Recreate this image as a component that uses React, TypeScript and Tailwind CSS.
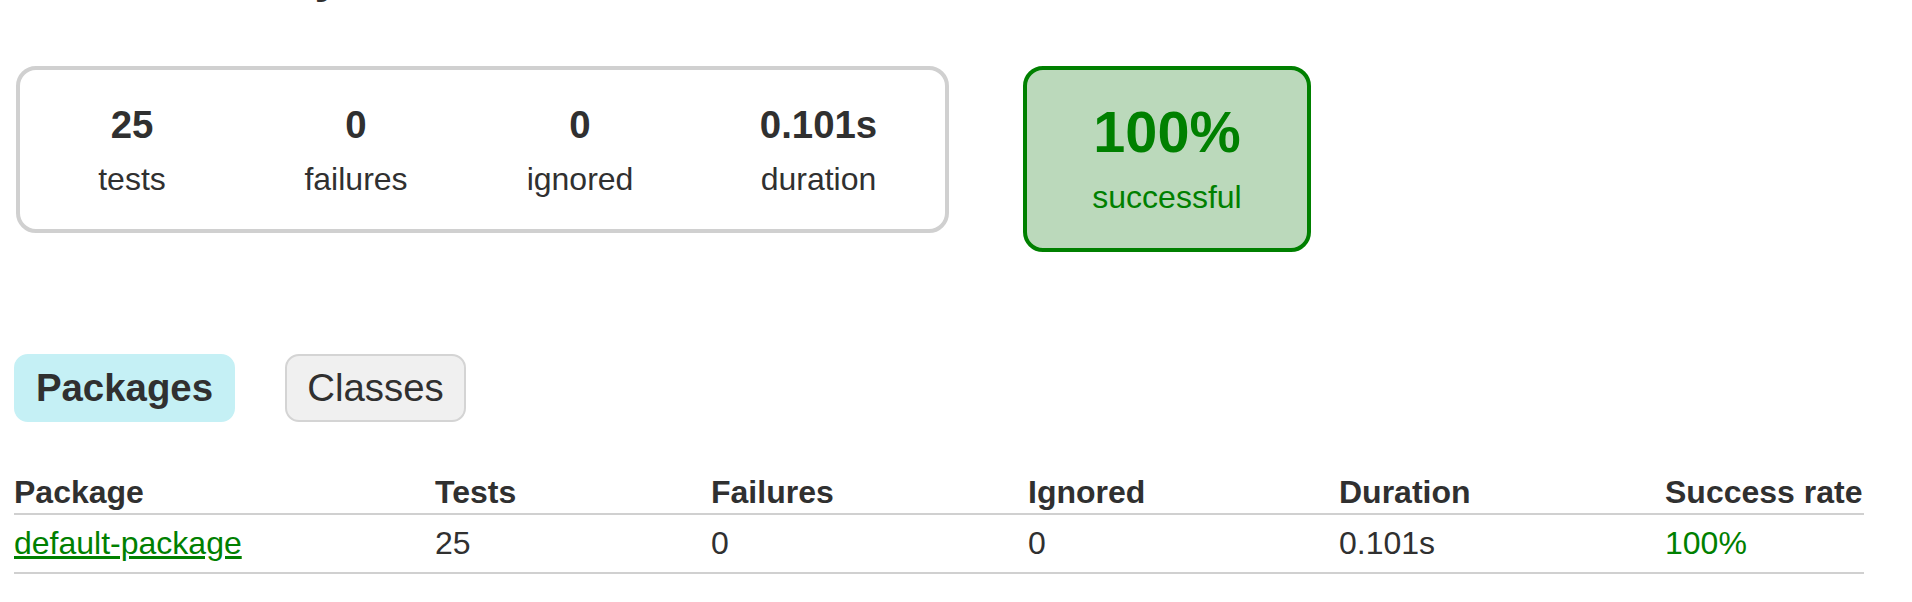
import React from "react";

const stats = [
  { value: "25", label: "tests", w: "w-[224px]" },
  { value: "0", label: "failures", w: "w-[224px]" },
  { value: "0", label: "ignored", w: "w-[224px]" },
  { value: "0.101s", label: "duration", w: "w-[253px]" },
];

const cols = [
  { name: "Package", w: "w-[421px]" },
  { name: "Tests", w: "w-[276px]" },
  { name: "Failures", w: "w-[317px]" },
  { name: "Ignored", w: "w-[311px]" },
  { name: "Duration", w: "w-[326px]" },
  { name: "Success rate", w: "w-[199px]" },
];

export default function App() {
  return (
    <div className="flex min-h-screen flex-col bg-white pl-[14px] font-['Liberation_Sans',Arial,Helvetica,sans-serif] text-[#303030]">
      <h1 className="mt-[-48px] whitespace-nowrap text-[48px] font-bold leading-[48px]">
        Test Summary
      </h1>

      <div className="mt-[66px] flex items-start">
        <div className="ml-[2px] flex rounded-[20px] border-4 border-[#d0d0d0]">
          {stats.map((s) => (
            <div key={s.label} className={`${s.w} pb-[31px] pt-[30px] text-center`}>
              <div className="text-[38.4px] font-bold leading-[50px]">{s.value}</div>
              <div className="mt-[11px] text-[32px] leading-[37px]">{s.label}</div>
            </div>
          ))}
        </div>
        <div className="ml-[74px] w-[288px] rounded-[20px] border-4 border-[#008000] bg-[#bbd9bb] pb-[32px] pt-[30px] text-center text-[#008000]">
          <div className="text-[57.6px] font-bold leading-[64px]">100%</div>
          <div className="mt-[15px] text-[32px] leading-[37px]">successful</div>
        </div>
      </div>

      <div className="mt-[102px] flex">
        <div className="flex h-[68px] w-[221px] items-center justify-center rounded-[14px] border-2 border-[#c5f0f5] bg-[#c5f0f5] text-[38.4px] font-bold leading-[44px]">
          Packages
        </div>
        <div className="ml-[50px] flex h-[68px] w-[181px] items-center justify-center rounded-[14px] border-2 border-[#d4d4d4] bg-[#f0f0f0] text-[38.4px] leading-[44px]">
          Classes
        </div>
      </div>

      <table className="mt-[52px] w-[1850px] table-fixed border-separate border-spacing-0 text-[32px] leading-[37px]">
        <thead>
          <tr>
            {cols.map((c) => (
              <th
                key={c.name}
                className={`${c.w} whitespace-nowrap border-b-2 border-[#d0d0d0] p-0 pb-[2px] text-left font-bold`}
              >
                {c.name}
              </th>
            ))}
          </tr>
        </thead>
        <tbody>
          <tr>
            <td className="border-b-2 border-[#d0d0d0] px-0 py-[10px]">
              <a href="#" className="text-[#008000] underline">
                default-package
              </a>
            </td>
            <td className="border-b-2 border-[#d0d0d0] px-0 py-[10px]">25</td>
            <td className="border-b-2 border-[#d0d0d0] px-0 py-[10px]">0</td>
            <td className="border-b-2 border-[#d0d0d0] px-0 py-[10px]">0</td>
            <td className="border-b-2 border-[#d0d0d0] px-0 py-[10px]">0.101s</td>
            <td className="border-b-2 border-[#d0d0d0] px-0 py-[10px] text-[#008000]">100%</td>
          </tr>
        </tbody>
      </table>
    </div>
  );
}
